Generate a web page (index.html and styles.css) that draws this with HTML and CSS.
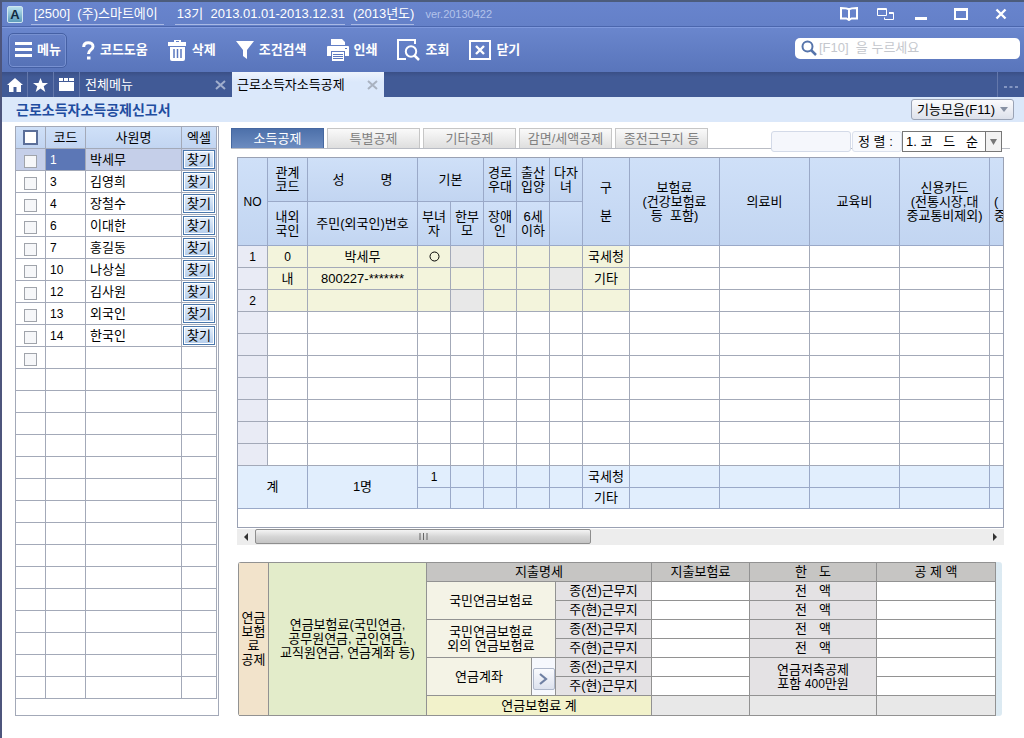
FILE: index.html
```html
<!DOCTYPE html>
<html lang="ko">
<head>
<meta charset="utf-8">
<title>근로소득자소득공제신고서</title>
<link rel="stylesheet" href="styles.css">
</head>
<body>
<header class="titlebar">
  <span class="logo">A</span>
  <span class="company">[2500]&nbsp; (주)스마트에이</span>
  <span class="period"><span class="underlined">13기&nbsp; 2013.01.01-2013.12.31</span><span class="underlined">(2013년도)</span></span>
  <span class="version">ver.20130422</span>
  <div class="window-controls">
    <button type="button" aria-label="도움말"><svg width="18" height="14" viewBox="0 0 18 14" fill="none" stroke="#fff" stroke-width="2"><path d="M9 2.500C7.500 1.200 5 1 1 1v10.500h5.500L9 13l2.500-1.500H17V1c-4 0-6.500.2-8 1.500zM9 2v10"/></svg></button>
    <button type="button" aria-label="창 전환"><svg width="17" height="13" viewBox="0 0 17 13" fill="none" stroke="#fff" stroke-width="1"><path d="M.5.5h9v7h-9zM.5 1.500h9M12 4.500h4.500v7h-9V9.500M12 5.500h4"/></svg></button>
    <button type="button" aria-label="최소화"><svg width="14" height="14" viewBox="0 0 14 14"><path d="M1 10h12v3H1z" fill="#fff"/></svg></button>
    <button type="button" class="maximize" aria-label="최대화"><svg width="14" height="12" viewBox="0 0 14 12"><path d="M0 0h14v12H0zM2 3v7h10V3z" fill="#fff" fill-rule="evenodd"/></svg></button>
    <button type="button" aria-label="창 닫기"><svg width="12" height="12" viewBox="0 0 12 12"><path d="M1.500 1.500l9 9M10.500 1.500l-9 9" stroke="#fff" stroke-width="2.400"/></svg></button>
  </div>
</header>

<div class="toolbar">
  <button type="button" class="menu"><svg width="17" height="16" viewBox="0 0 17 16"><path d="M0 0h17v3H0zM0 6h17v3H0zM0 12h17v3H0z" fill="#fff"/></svg>메뉴</button>
  <div class="tools">
    <button type="button"><svg width="13" height="19" viewBox="0 0 13 19" fill="none" stroke="#fff" stroke-width="3"><path d="M1.700 6C1.700 3 3.500 1.700 6.300 1.700S11 3.300 11 5.500c0 3.500-4.500 3.500-4.500 7.500"/><path d="M5 15.500h3.500v3H5z" fill="#fff" stroke="none"/></svg>코드도움</button>
    <button type="button"><svg width="19" height="21" viewBox="0 0 19 21"><path d="M6 0h7v2h5v4H0V2h6zM8 1v1h3V1zM2 7h15v12q0 2-2 2H4q-2 0-2-2z" fill="#fff" fill-rule="evenodd"/><path d="M6 9v9M9.500 9v9M13 9v9" stroke="#5b78bf" stroke-width="1.500"/></svg>삭제</button>
    <button type="button"><svg width="18" height="18" viewBox="0 0 18 18"><path d="M0 0h18l-7 9v9l-4-3V9z" fill="#fff"/></svg>조건검색</button>
    <button type="button"><svg width="22" height="22" viewBox="0 0 22 22"><path d="M4 0h11l3 3v3H4zM1 7h20q1 0 1 1v9h-4v-5H4v5H0V8q0-1 1-1zM5 13h12v9H5z" fill="#fff"/><path d="M6 15.500h10M6 17.500h10M6 19.500h10" stroke="#5b78bf"/><path d="M18 9h2v1h-2z" fill="#5b78bf"/></svg>인쇄</button>
    <button type="button"><svg width="23" height="22" viewBox="0 0 23 22" fill="none" stroke="#fff" stroke-width="2"><path d="M18 5V1H1v19h8"/><circle cx="14" cy="12.500" r="5.200"/><path d="M17.500 16.500l4.500 4.500" stroke-width="2.500"/></svg>조회</button>
    <button type="button"><svg width="22" height="20" viewBox="0 0 22 20" fill="none" stroke="#fff"><path d="M1 1h20v18H1z" stroke-width="2"/><path d="M7 6l8 8M15 6l-8 8" stroke-width="2.400"/></svg>닫기</button>
  </div>
  <label class="search"><svg width="16" height="16" viewBox="0 0 16 16" fill="none" stroke="#5674ab" stroke-width="2"><circle cx="6.500" cy="6.500" r="5"/><path d="M10 10l5 5" stroke-width="2.500"/></svg><input type="text" placeholder="[F10]  을 누르세요" aria-label="검색"></label>
</div>

<nav class="tabbar">
  <button type="button" class="shortcut" aria-label="홈"><svg width="16" height="14" viewBox="0 0 16 14"><path d="M8 0l8 7h-2v7H9.500V9h-3v5H2V7H0z" fill="#fff"/></svg></button>
  <button type="button" class="shortcut" aria-label="즐겨찾기"><svg width="15" height="14" viewBox="0 0 15 14"><path d="M7.500 0l2 5H15l-4.300 3.300L12.300 14l-4.800-3.400L2.700 14l1.600-5.700L0 5h5.500z" fill="#fff"/></svg></button>
  <button type="button" class="shortcut" aria-label="목록"><svg width="15" height="13" viewBox="0 0 15 13"><path d="M0 0h4v3H0zM5 0h4v3H5zM10 0h5v3h-5zM0 4h15v9H0z" fill="#fff"/></svg></button>
  <div class="doc-tab"><a href="#">전체메뉴</a><button type="button" aria-label="전체메뉴 닫기"><svg width="11" height="10" viewBox="0 0 11 10"><path d="M1 1l9 8M10 1L1 9" stroke="#a0aecd" stroke-width="2"/></svg></button></div>
  <div class="doc-tab current"><a href="#">근로소득자소득공제</a><button type="button" aria-label="탭 닫기"><svg width="11" height="10" viewBox="0 0 11 10"><path d="M1 1l9 8M10 1L1 9" stroke="#a9b2c0" stroke-width="2"/></svg></button></div>
  <button type="button" class="more" aria-label="더보기"><svg width="14" height="4" viewBox="0 0 14 4"><path d="M0 1h3v2H0zM5.500 1h3v2h-3zM11 1h3v2h-3z" fill="#8496c2"/></svg></button>
</nav>

<div class="subtitle">
  <h1>근로소득자소득공제신고서</h1>
  <button type="button">기능모음(F11)<svg width="8" height="5" viewBox="0 0 8 5"><path d="M0 0h8L4 5z" fill="#8791a3"/></svg></button>
</div>

<main class="content">
  <section class="employees">
    <table>
      <colgroup><col class="w30"><col class="w40"><col class="w96"><col class="w35"></colgroup>
      <thead><tr><th><input type="checkbox" class="all" aria-label="전체 선택"></th><th>코드</th><th>사원명</th><th>엑셀</th></tr></thead>
      <tbody>
        <tr class="selected"><td><input type="checkbox" aria-label="박세무"></td><td class="num">1</td><td>박세무</td><td><button type="button">찾기</button></td></tr>
        <tr><td><input type="checkbox" aria-label="김영희"></td><td class="num">3</td><td>김영희</td><td><button type="button">찾기</button></td></tr>
        <tr><td><input type="checkbox" aria-label="장철수"></td><td class="num">4</td><td>장철수</td><td><button type="button">찾기</button></td></tr>
        <tr><td><input type="checkbox" aria-label="이대한"></td><td class="num">6</td><td>이대한</td><td><button type="button">찾기</button></td></tr>
        <tr><td><input type="checkbox" aria-label="홍길동"></td><td class="num">7</td><td>홍길동</td><td><button type="button">찾기</button></td></tr>
        <tr><td><input type="checkbox" aria-label="나상실"></td><td class="num">10</td><td>나상실</td><td><button type="button">찾기</button></td></tr>
        <tr><td><input type="checkbox" aria-label="김사원"></td><td class="num">12</td><td>김사원</td><td><button type="button">찾기</button></td></tr>
        <tr><td><input type="checkbox" aria-label="외국인"></td><td class="num">13</td><td>외국인</td><td><button type="button">찾기</button></td></tr>
        <tr><td><input type="checkbox" aria-label="한국인"></td><td class="num">14</td><td>한국인</td><td><button type="button">찾기</button></td></tr>
        <tr><td><input type="checkbox" aria-label="새 사원"></td><td></td><td></td><td></td></tr>
        <tr><td></td><td></td><td></td><td></td></tr>
        <tr><td></td><td></td><td></td><td></td></tr>
        <tr><td></td><td></td><td></td><td></td></tr>
        <tr><td></td><td></td><td></td><td></td></tr>
        <tr><td></td><td></td><td></td><td></td></tr>
        <tr><td></td><td></td><td></td><td></td></tr>
        <tr><td></td><td></td><td></td><td></td></tr>
        <tr><td></td><td></td><td></td><td></td></tr>
        <tr><td></td><td></td><td></td><td></td></tr>
        <tr><td></td><td></td><td></td><td></td></tr>
        <tr><td></td><td></td><td></td><td></td></tr>
        <tr><td></td><td></td><td></td><td></td></tr>
        <tr><td></td><td></td><td></td><td></td></tr>
        <tr><td></td><td></td><td></td><td></td></tr>
        <tr><td></td><td></td><td></td><td></td></tr>
      </tbody>
    </table>
  </section>

  <section class="detail">
    <div class="strip">
      <button type="button" class="active">소득공제</button>
      <button type="button">특별공제</button>
      <button type="button">기타공제</button>
      <button type="button">감면/세액공제</button>
      <button type="button">종전근무지 등</button>
      <div class="sort">
        <input type="text" aria-label="검색어">
        <label for="order">정 렬 :</label>
        <div class="select"><select id="order"><option>1. 코 &nbsp; 드 &nbsp; 순</option></select><span class="arrow"><svg width="7" height="6" viewBox="0 0 7 6"><path d="M0 0h7L3.500 6z" fill="#777"/></svg></span></div>
      </div>
    </div>

    <div class="grid">
      <table>
        <colgroup><col class="w30"><col class="w40"><col class="w110"><col class="w33"><col class="w33"><col class="w33"><col class="w33"><col class="w33"><col class="w47"><col class="w90"><col class="w90"><col class="w90"><col class="w90"><col class="w90"></colgroup>
        <thead>
          <tr><th rowspan="2" class="num">NO</th><th>관계<br>코드</th><th><span class="spread wide"><span>성</span><span>명</span></span></th><th colspan="2">기본</th><th>경로<br>우대</th><th>출산<br>입양</th><th>다자<br>녀</th><th rowspan="2">구<br><br>분</th><th rowspan="2">보험료<br>(건강보험료<br>등&nbsp; 포함)</th><th rowspan="2">의료비</th><th rowspan="2">교육비</th><th rowspan="2">신용카드<br>(전통시장,대<br>중교통비제외)</th><th rowspan="2" class="edge"><br>(<br>중</th></tr>
          <tr><th>내외<br>국인</th><th>주민(외국인)번호</th><th>부녀<br>자</th><th>한부<br>모</th><th>장애<br>인</th><th>6세<br>이하</th><th></th></tr>
        </thead>
        <tbody>
          <tr class="entry"><td class="num">1</td><td class="num">0</td><td>박세무</td><td><svg class="ring" width="11" height="11" viewBox="0 0 11 11"><circle cx="5.500" cy="5.500" r="4.500" fill="none" stroke="#000"/></svg></td><td class="off"></td><td></td><td></td><td></td><td>국세청</td><td></td><td></td><td></td><td></td><td></td></tr>
          <tr class="entry"><td></td><td>내</td><td>800227-*******</td><td></td><td></td><td></td><td></td><td class="off"></td><td>기타</td><td></td><td></td><td></td><td></td><td></td></tr>
          <tr class="entry"><td class="num">2</td><td></td><td></td><td></td><td class="off"></td><td></td><td></td><td></td><td></td><td></td><td></td><td></td><td></td><td></td></tr>
          <tr><td></td><td></td><td></td><td></td><td></td><td></td><td></td><td></td><td></td><td></td><td></td><td></td><td></td><td></td></tr>
          <tr><td></td><td></td><td></td><td></td><td></td><td></td><td></td><td></td><td></td><td></td><td></td><td></td><td></td><td></td></tr>
          <tr><td></td><td></td><td></td><td></td><td></td><td></td><td></td><td></td><td></td><td></td><td></td><td></td><td></td><td></td></tr>
          <tr><td></td><td></td><td></td><td></td><td></td><td></td><td></td><td></td><td></td><td></td><td></td><td></td><td></td><td></td></tr>
          <tr><td></td><td></td><td></td><td></td><td></td><td></td><td></td><td></td><td></td><td></td><td></td><td></td><td></td><td></td></tr>
          <tr><td></td><td></td><td></td><td></td><td></td><td></td><td></td><td></td><td></td><td></td><td></td><td></td><td></td><td></td></tr>
          <tr><td></td><td></td><td></td><td></td><td></td><td></td><td></td><td></td><td></td><td></td><td></td><td></td><td></td><td></td></tr>
        </tbody>
        <tfoot>
          <tr><td colspan="2" rowspan="2">계</td><td rowspan="2">1명</td><td class="num">1</td><td></td><td></td><td></td><td></td><td>국세청</td><td></td><td></td><td></td><td></td><td></td></tr>
          <tr><td></td><td></td><td></td><td></td><td></td><td>기타</td><td></td><td></td><td></td><td></td><td></td></tr>
        </tfoot>
      </table>
    </div>
    <div class="scrollbar">
      <button type="button" aria-label="왼쪽"><svg width="4" height="8" viewBox="0 0 4 8"><path d="M4 0v8L0 4z" fill="#333"/></svg></button>
      <div class="track"><div class="thumb"><svg width="9" height="7" viewBox="0 0 9 7"><path d="M1 0v7M4.500 0v7M8 0v7" stroke="#666"/></svg></div></div>
      <button type="button" aria-label="오른쪽"><svg width="4" height="8" viewBox="0 0 4 8"><path d="M0 0v8l4-4z" fill="#333"/></svg></button>
    </div>

    <div class="pension">
      <table>
        <colgroup><col class="w30"><col class="w158"><col class="w105"><col class="w24"><col class="w96"><col class="w98"><col class="w127"><col></colgroup>
        <tbody>
          <tr><th rowspan="8" class="peach">연금<br>보험<br>료<br>공제</th><th rowspan="8" class="green">연금보험료(국민연금,<br>공무원연금, 군인연금,<br>교직원연금, 연금계좌 등)</th><th colspan="3" class="head">지출명세</th><th class="head">지출보험료</th><th class="head"><span class="spread"><span>한</span><span>도</span></span></th><th class="head">공 제 액</th></tr>
          <tr><th rowspan="2" colspan="2" class="cream">국민연금보험료</th><th class="gray">종(전)근무지</th><td></td><td class="gray"><span class="spread"><span>전</span><span>액</span></span></td><td></td></tr>
          <tr><th class="gray">주(현)근무지</th><td></td><td class="gray"><span class="spread"><span>전</span><span>액</span></span></td><td></td></tr>
          <tr><th rowspan="2" colspan="2" class="cream">국민연금보험료<br>외의 연금보험료</th><th class="gray">종(전)근무지</th><td></td><td class="gray"><span class="spread"><span>전</span><span>액</span></span></td><td></td></tr>
          <tr><th class="gray">주(현)근무지</th><td></td><td class="gray"><span class="spread"><span>전</span><span>액</span></span></td><td></td></tr>
          <tr><th rowspan="2" class="cream">연금계좌</th><td rowspan="2" class="opener"><button type="button" aria-label="연금계좌 상세"><svg width="9" height="12" viewBox="0 0 9 12"><path d="M1 1l6 5-6 5" fill="none" stroke="#6f80a3" stroke-width="2.200"/></svg></button></td><th class="gray">종(전)근무지</th><td></td><td rowspan="2" class="gray">연금저축공제<br>포함 <span class="num">400</span>만원</td><td></td></tr>
          <tr><th class="gray">주(현)근무지</th><td></td><td></td></tr>
          <tr class="sum"><th colspan="3" class="yellow">연금보험료 계</th><td></td><td class="gray"></td><td></td></tr>
        </tbody>
      </table>
    </div>
  </section>
</main>
</body>
</html>
```
FILE: styles.css
```css
* { box-sizing: border-box; }
body {
  margin: 0;
  min-height: 100vh;
  border-top: 2px solid #4c5c7c;
  border-left: 2px solid #4d557c;
  background: #fff;
  color: #000;
  font: 13px/14px "Liberation Sans", "Noto Sans CJK KR", sans-serif;
}
button, input, select { font: inherit; color: inherit; }
button { padding: 0; border: 0; background: none; }
svg { display: block; flex: none; }
a { color: inherit; text-decoration: none; }
.num { font-size: 12px; }

/* title bar */
.titlebar {
  display: flex;
  align-items: center;
  height: 25px;
  padding: 0 5px;
  border-bottom: 1px solid #4b66ad;
  background: linear-gradient(#6884cd, #6480c8);
  color: #fff;
  white-space: nowrap;
}
.logo {
  width: 16px;
  height: 17px;
  margin-right: 8px;
  border: 1px solid #cfe6f2;
  border-radius: 2px;
  background: linear-gradient(#b9e0ee, #5d9cba);
  color: #10293f;
  font-weight: bold;
  line-height: 15px;
  text-align: center;
}
.company { padding: 3px 6px 3px 3px; border-bottom: 1px solid #a9b9e4; }
.period { display: flex; gap: 6px; margin-left: 11px; }
.underlined { padding: 3px 0 3px 2px; border-bottom: 1px solid #a9b9e4; }
.version { margin-left: 11px; color: #b3c2ea; font-size: 11px; }
.window-controls { display: flex; margin-left: auto; }
.window-controls button { display: grid; place-items: center; width: 36px; }
.window-controls .maximize { width: 44px; }

/* toolbar */
.toolbar {
  display: flex;
  align-items: center;
  height: 45px;
  padding: 0 4px 0 6px;
  border-top: 1px solid #809ade;
  background: linear-gradient(#6a86cd, #5975bb);
  color: #fff;
  font-weight: bold;
  white-space: nowrap;
}
.toolbar button { display: flex; align-items: center; gap: 5px; }
.toolbar .menu {
  height: 35px;
  padding: 0 5px 0 6px;
  border: 1px solid #4560a4;
  border-radius: 5px;
  background: linear-gradient(#6681c8, #5571b6);
  box-shadow: inset 0 0 0 1px #7891d1;
}
.tools { display: flex; gap: 20px; margin-left: 15px; }
.search {
  display: flex;
  align-items: center;
  gap: 2px;
  width: 225px;
  height: 21px;
  margin: 0 0 4px auto;
  padding: 0 6px;
  border-radius: 5px;
  background: #fff;
}
.search input { width: 100%; min-width: 0; padding: 0; border: 0; outline: 0; background: none; }
.search input::placeholder { color: #c4c7cd; font-weight: normal; white-space: pre; }

/* open documents */
.tabbar {
  display: flex;
  height: 25px;
  background: linear-gradient(#3a4f86, #415a96 5px);
  color: #fff;
}
.shortcut { display: grid; place-items: center; width: 26px; border-right: 1px solid #6478ab; }
.doc-tab { display: flex; align-items: center; justify-content: space-between; width: 152px; padding: 0 6px 0 5px; }
.current { background: linear-gradient(#eef4fd, #dbe8fb 10px); color: #000; }
.more { display: grid; place-items: center; width: 27px; margin-left: auto; padding: 5px 0 0; border-left: 1px solid #6478ab; }

.subtitle {
  display: flex;
  align-items: center;
  justify-content: space-between;
  height: 25px;
  padding: 0 10px 0 14px;
  background: #dbe8fa;
}
.subtitle h1 { margin: 0; color: #1f4da0; font-size: 14px; }
.subtitle button {
  display: flex;
  align-items: center;
  gap: 5px;
  height: 21px;
  padding: 0 5px;
  border: 1px solid #9aa3b5;
  border-radius: 3px;
  background: linear-gradient(#fbfbfd, #dde1eb);
}

/* shared table rules */
table { border-collapse: separate; border-spacing: 0; table-layout: fixed; }
th, td { padding: 0; border: solid #a3a9b8; border-width: 0 1px 1px 0; font-weight: normal; text-align: center; white-space: nowrap; }
.w24 { width: 24px; } .w30 { width: 30px; } .w33 { width: 33px; } .w35 { width: 35px; }
.w40 { width: 40px; } .w47 { width: 47px; } .w90 { width: 90px; } .w96 { width: 96px; }
.w98 { width: 98px; } .w105 { width: 105px; } .w110 { width: 110px; } .w127 { width: 127px; } .w158 { width: 158px; }
.spread { display: inline-flex; gap: 12px; }
.spread.wide { gap: 36px; }

.content { display: flex; align-items: flex-start; gap: 12px; padding: 4px 14px 20px 13px; }

/* employee list */
.employees { flex: none; width: 204px; padding-bottom: 16px; border: 1px solid #a3a9b8; }
.employees table { width: 201px; }
.employees th, .employees td { height: 22px; }
.employees th { background: linear-gradient(#cfe0f8, #c2d5f1); }
.employees td:nth-child(2), .employees td:nth-child(3) { padding-left: 4px; text-align: left; }
.employees .selected td { background: #c5cfe9; }
.employees .selected td:nth-child(2) { background: #5c77b6; color: #fff; }
.employees input {
  appearance: none;
  display: block;
  width: 13px;
  height: 13px;
  margin: 3px auto 0;
  border: 1px solid #a0a4ab;
  background: #f6f7f9;
}
.employees .all { width: 15px; height: 15px; margin: 0 auto; border: 2px solid #5b6f99; background: #fff; }
.employees button {
  display: block;
  width: 32px;
  height: 19px;
  margin: 0 auto;
  border: 1px solid #4b78ac;
  background: linear-gradient(#e6f0fc, #b4cdec);
  box-shadow: inset 0 0 0 1px #fff;
}

/* section tabs */
.detail { flex: 1; min-width: 0; padding-top: 2px; }
.strip { display: flex; gap: 3px; height: 21px; margin-bottom: 8px; border-bottom: 1px solid #b9bcc4; }
.strip > button {
  width: 93px;
  border: 1px solid #c6c6c6;
  border-bottom: 0;
  background: linear-gradient(#fafafa, #dedede);
  color: #808080;
}
.strip > .active { border-color: #4668a0; background: linear-gradient(#4d70aa, #6c8cc0); color: #fff; }
.sort { display: flex; align-items: center; align-self: flex-start; height: 21px; margin: 3px 8px 0 auto; }
.sort input { width: 80px; height: 21px; border: 1px solid #d3dae8; border-radius: 3px; background: #f5f7fc; }
.sort label { width: 50px; height: 21px; margin-left: 1px; padding: 3px 5px; border: 1px solid #dbe1ed; border-radius: 3px; background: #f7f9fd; white-space: pre; }
.select { display: flex; width: 100px; height: 21px; border: 1px solid #777; background: #fff; }
.select select { appearance: none; flex: 1; min-width: 0; padding: 0 3px; border: 0; background: #fff; }
.arrow { display: grid; place-items: center; width: 16px; border-left: 1px solid #777; background: #f2f2f2; }

/* deduction grid */
.grid { margin: 0 6px; padding-bottom: 18px; overflow: hidden; border: 1px solid #9aa1b3; }
.grid table { width: 842px; }
.grid th { height: 44px; border-color: #9aa9c8; background: linear-gradient(#cfe0f8, #c2d5f1); }
.grid .edge { padding-left: 4px; text-align: left; }
.grid td { height: 22px; }
.grid tbody td:first-child { background: #e9ebf5; }
.entry td:nth-child(n+2):nth-child(-n+9) { background: #f3f4dc; }
.grid tbody .entry td.off { background: #e8e8e8; }
.grid tfoot td { border-color: #9aa9c8; background: #e1eefd; }
.grid tfoot tr:last-child td { height: 21px; }
.ring { margin: 0 auto; }

.scrollbar { display: flex; height: 16px; margin: 1px 6px 0; background: #ededed; }
.scrollbar button { display: grid; place-items: center; width: 18px; }
.track { flex: 1; }
.thumb {
  display: grid;
  place-items: center;
  width: 46%;
  height: 15px;
  border: 1px solid #8e8e8e;
  border-radius: 2px;
  background: linear-gradient(#f4f4f4, #d6d6d6 50%, #c4c4c4);
}

/* pension deduction */
.pension {
  margin: 17px 8px 0 7px;
  padding-right: 6px;
  border-radius: 3px;
  background: linear-gradient(to right, #fff, #dceaf2);
}
.pension table { width: 100%; border: solid #929292; border-width: 1px 0 0 1px; border-radius: 3px 0 0 3px; background: #fff; }
.pension th, .pension td { height: 19px; border-color: #929292; }
.pension .sum th, .pension .sum td { height: 20px; }
.pension .sum td { background: #e8e8e8; }
.peach { background: #f2e3cb; }
.green { background: #e3ecca; }
.head { background: #c6c5c3; }
.cream { background: #f4f3e6; }
.gray { background: #e4e2e4; }
.yellow { background: #f2f2cb; }
.opener { background: #f6f8fd; vertical-align: bottom; }
.opener button {
  display: grid;
  place-items: center;
  width: 22px;
  height: 22px;
  margin: 0 auto 5px;
  border: 1px solid #aeb7ca;
  border-radius: 2px;
  background: linear-gradient(#fafbfe, #dde2ee);
}
```
